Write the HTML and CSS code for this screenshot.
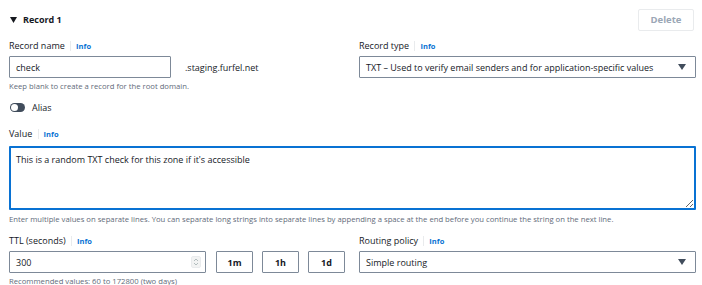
FILE: index.html
```html
<!DOCTYPE html>
<html lang="en">
<head>
  <meta charset="UTF-8" />
  <title>Record 1</title>
  <link rel="stylesheet" href="styles.css">
</head>
<body>
  <div class="record">
    <div class="record-head">
      <div class="record-title">
        <svg class="caret" width="7" height="6" viewBox="0 0 7 6"><path d="M0 0h7L3.5 6z" fill="#16191f"/></svg>
        <span>Record 1</span>
      </div>
      <button class="btn-delete" disabled>Delete</button>
    </div>

    <div class="grid">
      <div class="field">
        <div class="label">Record name <span class="info">Info</span></div>
        <div class="name-row">
          <input class="input name-input" type="text" value="check" />
          <span class="suffix">.staging.furfel.net</span>
        </div>
        <div class="hint">Keep blank to create a record for the root domain.</div>
      </div>
      <div class="field">
        <div class="label">Record type <span class="info">Info</span></div>
        <div class="select">
          <span>TXT – Used to verify email senders and for application-specific values</span>
          <svg width="8" height="6" viewBox="0 0 8 6"><path d="M0 0h8L4 6z" fill="#414d5c"/></svg>
        </div>
      </div>
    </div>

    <div class="alias">
      <span class="toggle"><span class="knob"></span></span>
      <span>Alias</span>
    </div>

    <div class="field">
      <div class="label">Value <span class="info">Info</span></div>
      <textarea class="textarea">This is a random TXT check for this zone if it's accessible</textarea>
      <div class="hint">Enter multiple values on separate lines. You can separate long strings into separate lines by appending a space at the end before you continue the string on the next line.</div>
    </div>

    <div class="grid ttl-grid">
      <div class="field">
        <div class="label">TTL (seconds) <span class="info">Info</span></div>
        <div class="ttl-row">
          <div class="input ttl-input">
            <span>300</span>
            <svg class="spin" width="10" height="12" viewBox="0 0 10 12"><rect x="0.5" y="0.5" width="9" height="11" rx="1.5" fill="#f2f3f3" stroke="#e9ebed"/><path d="M3 5l2-2 2 2M3 7l2 2 2-2" fill="none" stroke="#aab7b8" stroke-width="0.9"/></svg>
          </div>
          <button class="btn-ttl">1m</button>
          <button class="btn-ttl">1h</button>
          <button class="btn-ttl">1d</button>
        </div>
        <div class="hint">Recommended values: 60 to 172800 (two days)</div>
      </div>
      <div class="field">
        <div class="label">Routing policy <span class="info">Info</span></div>
        <div class="select">
          <span>Simple routing</span>
          <svg width="8" height="6" viewBox="0 0 8 6"><path d="M0 0h8L4 6z" fill="#414d5c"/></svg>
        </div>
      </div>
    </div>
  </div>
</body>
</html>
```

FILE: styles.css
```css
body {
  margin: 0;
  font-family: 'Open Sans', sans-serif;
  color: #16191f;
  background: #fff;
}
.record {
  padding: 9px 6px 0 9px;
}
.record-head {
  display: flex;
  justify-content: space-between;
  align-items: center;
  height: 21px;
}
.record-title {
  display: flex;
  align-items: center;
  gap: 6px;
  padding-left: 1px;
  font-size: 9px;
  font-weight: 700;
}
.btn-delete {
  width: 56px;
  height: 22px;
  margin-right: 2px;
  border: 1px solid #e9ebed;
  border-radius: 2px;
  background: #fff;
  color: #9ba7b6;
  font-family: inherit;
  font-size: 9.5px;
  font-weight: 700;
}
.grid {
  display: grid;
  grid-template-columns: 337px 337px;
  column-gap: 13px;
  margin-top: 8px;
}
.field {
  display: flex;
  flex-direction: column;
}
.label {
  font-size: 9px;
  height: 16px;
  line-height: 16px;
  margin-bottom: 2px;
}
.info {
  color: #0972d3;
  font-size: 7.5px;
  font-weight: 700;
  margin-left: 3px;
  padding-left: 5px;
  border-left: 1px solid #e9ebed;
}
.name-row {
  display: flex;
  align-items: center;
  gap: 14px;
}
.input {
  box-sizing: border-box;
  height: 22px;
  border: 1px solid #7d8998;
  border-radius: 1px;
  padding: 0 6px;
  font-family: inherit;
  font-size: 9px;
  color: #16191f;
  outline: none;
}
.name-input {
  width: 162px;
}
.suffix {
  font-size: 9px;
}
.hint {
  font-size: 7.7px;
  color: #5f6b7a;
  margin-top: 3px;
}
.select {
  box-sizing: border-box;
  height: 22px;
  display: flex;
  align-items: center;
  justify-content: space-between;
  padding: 0 9px 0 6px;
  border: 1px solid #7d8998;
  border-radius: 1px;
  font-size: 9px;
}
.alias {
  display: flex;
  align-items: center;
  gap: 7px;
  margin-top: 10px;
  padding-left: 1px;
  font-size: 9px;
}
.toggle {
  position: relative;
  width: 15px;
  height: 9px;
  border-radius: 5px;
  background: #414d5c;
}
.knob {
  position: absolute;
  left: 1px;
  top: 1px;
  width: 7px;
  height: 7px;
  border-radius: 50%;
  background: #fff;
}
.alias + .field {
  margin-top: 12px;
}
.textarea {
  box-sizing: border-box;
  width: 687px;
  height: 64px;
  margin-top: 2px;
  padding: 5px 5px;
  border: 2px solid #0972d3;
  border-radius: 1px;
  font-family: inherit;
  font-size: 9px;
  color: #16191f;
  resize: vertical;
  outline: none;
}
.textarea + .hint {
  margin-top: 4px;
}
.ttl-grid {
  margin-top: 9px;
}
.ttl-row {
  display: flex;
  gap: 9px;
}
.ttl-input {
  width: 197px;
  display: flex;
  align-items: center;
  justify-content: space-between;
  padding-right: 4px;
  margin-right: 1px;
}
.btn-ttl {
  width: 37px;
  height: 22px;
  border: 1px solid #7d8998;
  border-radius: 1px;
  background: #fff;
  font-family: inherit;
  font-size: 9px;
  font-weight: 700;
  color: #16191f;
}
```
